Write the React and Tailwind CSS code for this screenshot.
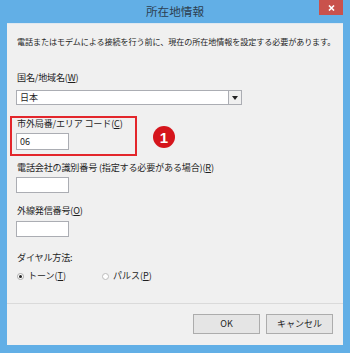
import React from 'react';

const font = { fontFamily: '"Noto Sans CJK JP", "Noto Sans", sans-serif' };

function Label({ children, className = '' }) {
  return (
    <p className={`h-[12px] leading-[12px] text-[9.1px] text-[#1e1e1e] whitespace-nowrap tracking-[-0.2px] ${className}`}>
      {children}
    </p>
  );
}

function TextBox({ value, className = '' }) {
  return (
    <div className={`w-[53px] border border-[#abadb3] bg-white pl-[3px] flex items-center text-[9px] text-[#1e1e1e] ${className}`}>
      {value}
    </div>
  );
}

export default function App() {
  return (
    <div className="w-[350px] h-[353px] bg-[#62afe6] relative overflow-hidden" style={font}>
      {/* Title bar */}
      <div className="h-[23px] flex items-center justify-center relative">
        <span className="text-[11.6px] text-[#2c3e50] leading-none mt-[1px]">所在地情報</span>
        <div className="absolute right-[7px] top-0 w-[24px] h-[15px] bg-[#c9524c] flex items-center justify-center">
          <svg width="7" height="6" viewBox="0 0 7 6">
            <path d="M1 0.5 L6 5.5 M6 0.5 L1 5.5" stroke="white" strokeWidth="1.6" />
          </svg>
        </div>
      </div>

      {/* Client area */}
      <div className="absolute left-[7px] right-[7px] top-[23px] bottom-[8px] bg-[#f0f0f0] border-t border-[#dfe8f0]">
        <div className="flex flex-col pl-[10px]">
          <p className="mt-[12px] h-[12px] leading-[12px] text-[8.1px] tracking-[-0.1px] text-[#1e1e1e] whitespace-nowrap">
            電話またはモデムによる接続を行う前に、現在の所在地情報を設定する必要があります。
          </p>

          <Label className="mt-[23px]">
            国名/地域名(<span className="underline">W</span>)
          </Label>
          <div className="mt-[7px] -ml-[1px] w-[226px] h-[15px] border border-[#abadb3] bg-white flex items-center">
            <span className="flex-1 pl-[3px] text-[9px] text-[#1e1e1e] leading-none">日本</span>
            <div className="w-[13px] h-[13px] border-l border-[#abadb3] bg-[#f0f0f0] flex items-center justify-center">
              <svg width="6" height="4" viewBox="0 0 6 4">
                <path d="M0 0 H6 L3 4 Z" fill="#222" />
              </svg>
            </div>
          </div>

          <Label className="mt-[12px]">
            市外局番/エリア コード(<span className="underline">C</span>)
          </Label>
          <TextBox value="06" className="mt-[4px] -ml-[1px] h-[17px]" />

          <Label className="mt-[11px]">
            電話会社の識別番号 (指定する必要がある場合)(<span className="underline">R</span>)
          </Label>
          <TextBox className="mt-[4px] -ml-[1px] h-[16px]" />

          <Label className="mt-[11px]">
            外線発信番号(<span className="underline">O</span>)
          </Label>
          <TextBox className="mt-[5px] -ml-[1px] h-[16px]" />

          <Label className="mt-[14px]">ダイヤル方法:</Label>

          <div className="mt-[7px] h-[12px] flex items-center text-[9px] text-[#1e1e1e]">
            <div className="flex items-center gap-[4px] w-[85px]">
              <span className="w-[7px] h-[7px] rounded-full border border-[#a8a8a8] bg-white flex items-center justify-center">
                <span className="w-[3px] h-[3px] rounded-full bg-[#222]" />
              </span>
              <span>トーン(<span className="underline">T</span>)</span>
            </div>
            <div className="flex items-center gap-[4px]">
              <span className="w-[7px] h-[7px] rounded-full border border-[#bcbcbc] bg-white" />
              <span>パルス(<span className="underline">P</span>)</span>
            </div>
          </div>
        </div>

        <div className="mt-[21px] h-px bg-[#dadada]" />

        <div className="mt-[10px] flex justify-end gap-[6px] pr-[10px]">
          <button className="w-[67px] h-[20px] border border-[#acacac] bg-[#e5e5e5] text-[9px] text-[#1e1e1e]">
            OK
          </button>
          <button className="w-[67px] h-[20px] border border-[#acacac] bg-[#e5e5e5] text-[9px] text-[#1e1e1e]">
            キャンセル
          </button>
        </div>
      </div>

      {/* Annotation overlay */}
      <div className="absolute left-[10px] top-[116px] w-[127px] h-[40px] border-2 border-[#e3262b]" />
      <div className="absolute left-[153px] top-[126px] w-[22px] h-[22px] rounded-full bg-[#d5151c] flex items-center justify-center text-white text-[15px] font-bold leading-none" style={{ fontFamily: '"Liberation Sans", Arial, sans-serif' }}>
        1
      </div>
    </div>
  );
}
